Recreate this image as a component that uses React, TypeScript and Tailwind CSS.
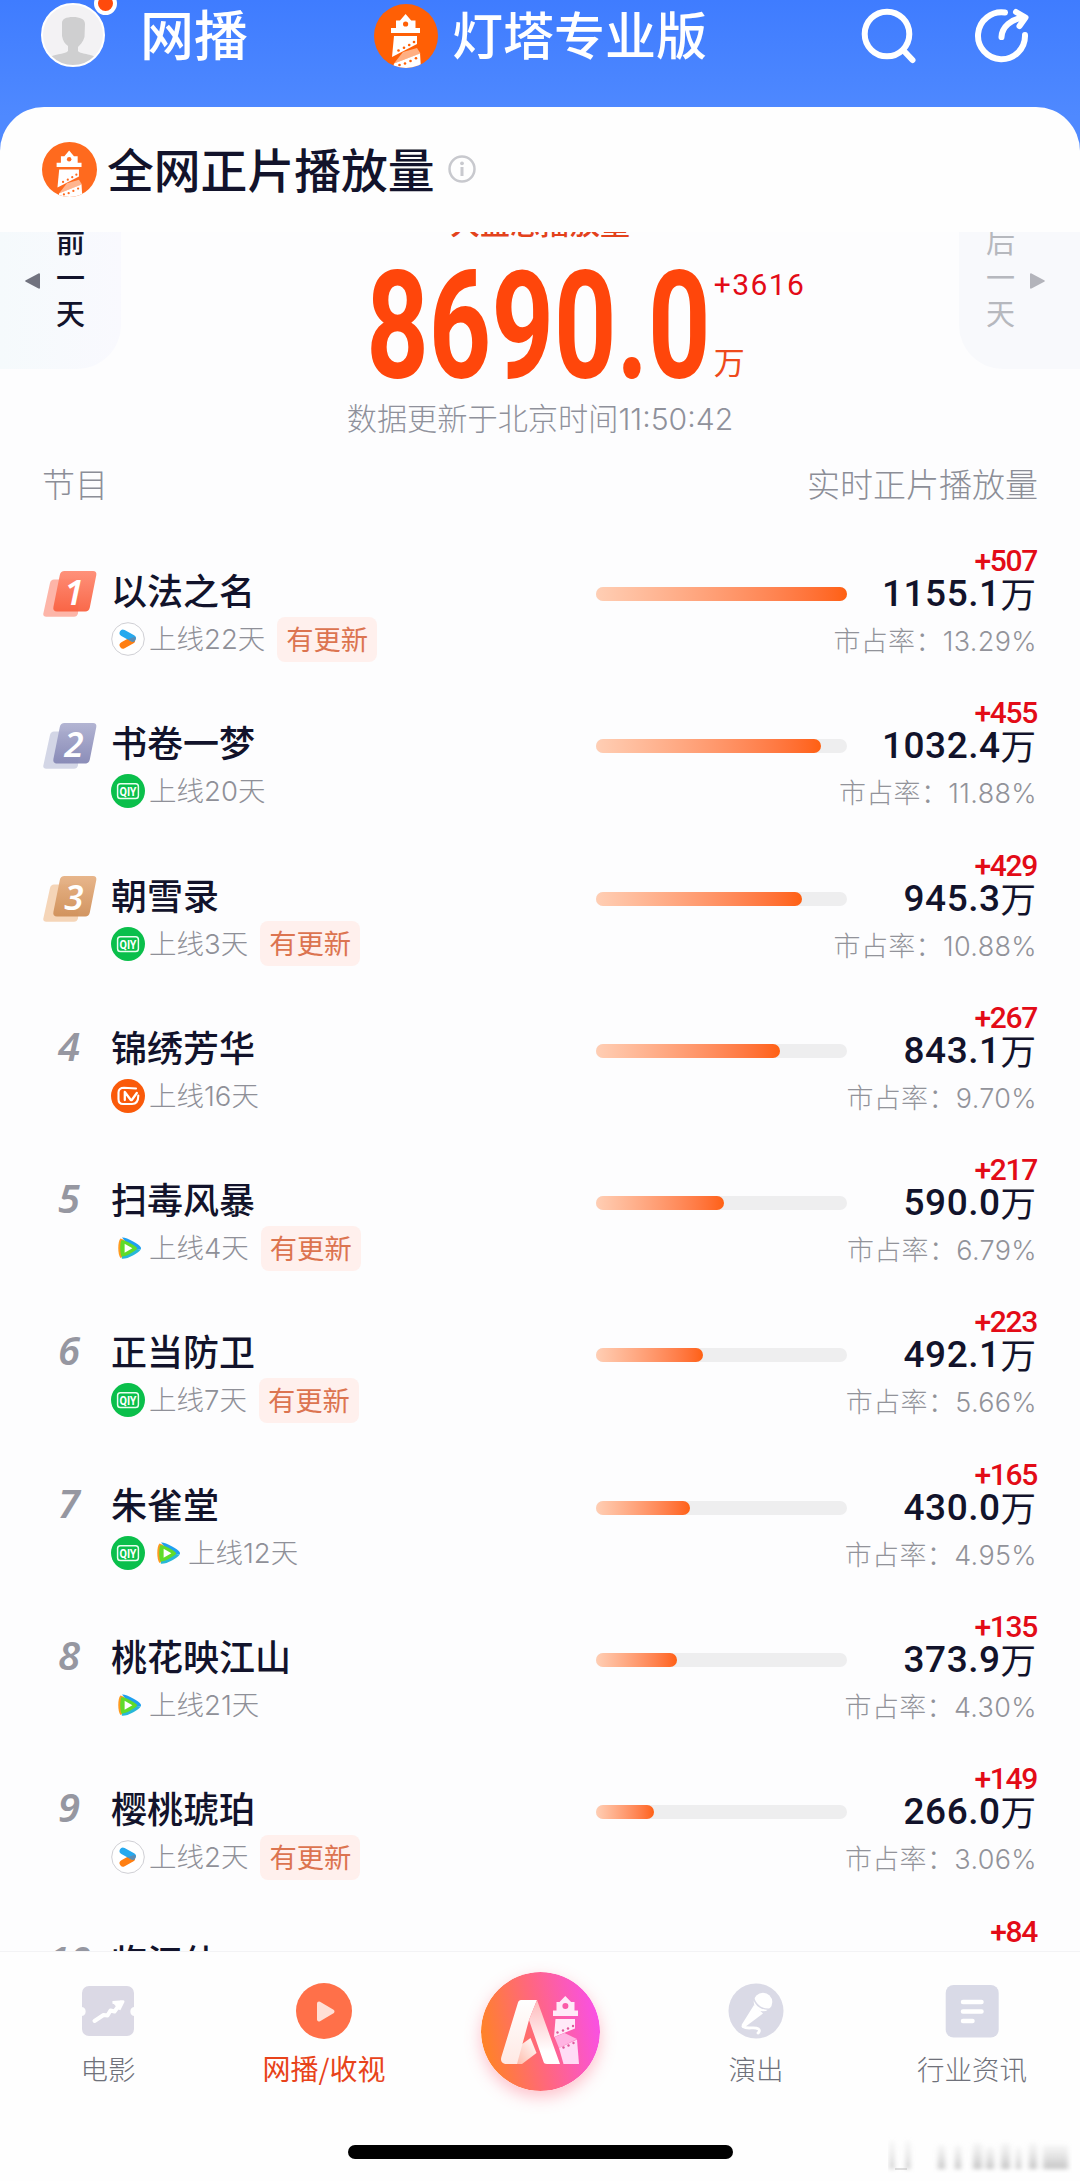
import React from "react";

const CJK = "font-['Noto_Sans_CJK_SC',sans-serif]";
const MIX = "font-['Inter','Noto_Sans_CJK_SC',sans-serif]";
const NUM = "font-['Roboto','Noto_Sans_CJK_SC',sans-serif]";

type Platform = "youku" | "iqiyi" | "mango" | "tencent";

interface Show {
  name: string;
  platforms: Platform[];
  days: number;
  updated?: boolean;
  bar: number;
  delta: number;
  value: string;
  share: string;
}

const shows: Show[] = [
  { name: "以法之名", platforms: ["youku"], days: 22, updated: true, bar: 251, delta: 507, value: "1155.1", share: "13.29%" },
  { name: "书卷一梦", platforms: ["iqiyi"], days: 20, bar: 225, delta: 455, value: "1032.4", share: "11.88%" },
  { name: "朝雪录", platforms: ["iqiyi"], days: 3, updated: true, bar: 206, delta: 429, value: "945.3", share: "10.88%" },
  { name: "锦绣芳华", platforms: ["mango"], days: 16, bar: 184, delta: 267, value: "843.1", share: "9.70%" },
  { name: "扫毒风暴", platforms: ["tencent"], days: 4, updated: true, bar: 128, delta: 217, value: "590.0", share: "6.79%" },
  { name: "正当防卫", platforms: ["iqiyi"], days: 7, updated: true, bar: 107, delta: 223, value: "492.1", share: "5.66%" },
  { name: "朱雀堂", platforms: ["iqiyi", "tencent"], days: 12, bar: 94, delta: 165, value: "430.0", share: "4.95%" },
  { name: "桃花映江山", platforms: ["tencent"], days: 21, bar: 81, delta: 135, value: "373.9", share: "4.30%" },
  { name: "樱桃琥珀", platforms: ["youku"], days: 2, updated: true, bar: 58, delta: 149, value: "266.0", share: "3.06%" },
];

const nextShow = { name: "临江仙", delta: 84, value: "188.6" };

function Lighthouse({ className, color, id }: { className: string; color: string; id: string }) {
  return (
    <svg viewBox="0 0 64 64" className={className}>
      <defs>
        <clipPath id={id}>
          <circle cx="32" cy="32" r="32" />
        </clipPath>
      </defs>
      <g clipPath={`url(#${id})`}>
        <rect width="64" height="64" fill={color} />
        <path d="M22 16.5h4l5.6-6.5 5.6 6.5h4.3V24H46v5H17v-5h5z" fill="#fff" />
        <circle cx="31.6" cy="20" r="2.6" fill={color} />
        <path d="M20 32h23v8L18 53z" fill="#fff" />
        <path d="M29 48l14-4 3.500 5.500L20 59.500z" fill="#fff" opacity=".5" />
        <path d="M46 49.500l1 15H19l1-5z" fill="#fff" />
        <g fill={color}>
          <circle cx="24.5" cy="46.5" r="1.3" />
          <circle cx="30" cy="43.8" r="1.3" />
          <circle cx="35.2" cy="41" r="1.3" />
          <circle cx="40" cy="38" r="1.3" />
          <circle cx="25.5" cy="61" r="1.3" />
          <circle cx="31" cy="59.500" r="1.3" />
          <circle cx="36.5" cy="57" r="1.3" />
          <circle cx="42" cy="54.2" r="1.3" />
        </g>
      </g>
    </svg>
  );
}

function PlatformIcon({ kind }: { kind: Platform }) {
  if (kind === "youku")
    return (
      <svg viewBox="0 0 34 34" className="size-[34px]">
        <circle cx="17" cy="17" r="16.3" fill="#fff" stroke="#c9c9cf" strokeWidth=".9" />
        <path d="M12 23.2l8.5-4.6" stroke="#ff7f12" strokeWidth="6.8" strokeLinecap="round" />
        <path d="M12 11l9.5 5.2" stroke="#26a9ee" strokeWidth="6.8" strokeLinecap="round" />
        <path d="M16.5 17.3l7.2-2.6c2 1.800 1 4.300-1.500 5.500z" fill="#6d83a0" opacity=".75" />
      </svg>
    );
  if (kind === "iqiyi")
    return (
      <svg viewBox="0 0 34 34" className="size-[34px]">
        <circle cx="17" cy="17" r="17" fill="#0abf4b" />
        <rect x="6.600" y="9.800" width="20.800" height="14.800" rx="2.800" fill="none" stroke="#e9fff0" strokeWidth="1.500" />
        <text x="17" y="21.600" textAnchor="middle" fontFamily="Roboto" fontWeight="700" fontSize="12.500" textLength="17" lengthAdjust="spacingAndGlyphs" fill="#fff">
          QIY
        </text>
      </svg>
    );
  if (kind === "mango")
    return (
      <svg viewBox="0 0 34 34" className="size-[34px]">
        <circle cx="17" cy="17" r="17" fill="#fa5a0a" />
        <path
          d="M25 9.500L13 8.800c-3.500 0-5.500 1.700-5.500 4.700v6.500c0 3.200 1.500 5 4.500 5h9c4 0 6.300-2.500 6.300-8.500"
          fill="none" stroke="#fff" strokeWidth="2.100" strokeLinecap="round"
        />
        <path d="M13.800 21v-8l6 8h1l5-7" fill="none" stroke="#fff" strokeWidth="2.300" strokeLinejoin="round" strokeLinecap="round" />
      </svg>
    );
  return (
    <svg viewBox="0 0 34 34" className="size-[34px]">
      <path d="M9.500 7.500c-3 3-3 16 0 19.500l4-2V9z" fill="#ff9a1f" />
      <path d="M11 6.600c4-.6 17 6.400 18.600 9.400.6 1 .5 1.800 0 2.600L20 17z" fill="#1ea0f0" />
      <path d="M10.800 27.800c5 .8 16.500-5.600 18.900-9.300L12 16z" fill="#27b7d8" />
      <path d="M10.300 9.300c3-1.300 14.500 5.200 16 8-1.500 2.800-12.500 8.800-15.700 8.300-1.700-3-1.800-12.800-.3-16.300z" fill="#5fdb2a" />
      <path d="M13.600 12.800l7.800 4.500-7.800 4.500z" fill="#fff" />
    </svg>
  );
}

const medals = [
  ["#ff8a72", "#f9603f", "#fdb5a8"],
  ["#aeb0d0", "#8486b4", "#d3d6e6"],
  ["#e6b184", "#cf8f58", "#f5d5b8"],
];

function Rank({ n }: { n: number }) {
  if (n > 3)
    return (
      <div className="flex w-[68px] shrink-0 justify-center pt-[22px] pr-[16px] font-['Noto_Sans',sans-serif] text-[40px] leading-[52px] font-semibold text-[#9697a1] italic">
        <span>{n}</span>
      </div>
    );
  const [top, bottom, back] = medals[n - 1];
  return (
    <div className="w-[68px] shrink-0 pt-[30px]">
      <svg viewBox="0 0 54 47" className="h-[47px] w-[54px]">
        <defs>
          <linearGradient id={`medal${n}`} x1="0" y1="0" x2="0" y2="1">
            <stop offset="0" stopColor={top} />
            <stop offset="1" stopColor={bottom} />
          </linearGradient>
        </defs>
        <path d="M11 8.500h26l-2 34c-.5 2-2 3.300-4 3.300H3.200C1 45.800-.2 44.500.4 42.300L7 12c.5-2.300 2-3.500 4-3.500z" fill={back} />
        <path d="M21.500 0H50c2.500 0 3.800 1.500 3.300 4l-6.500 32.500c-.5 2.500-2.200 4-4.500 4H14c-2.800 0-4.200-1.700-3.600-4.500L16.800 4c.5-2.500 2.200-4 4.700-4z" fill={`url(#medal${n})`} opacity=".94" />
        <text x="31" y="33.500" textAnchor="middle" fontFamily="Noto Sans" fontStyle="italic" fontWeight="600" fontSize="35" fill="#fff">
          {n}
        </text>
      </svg>
    </div>
  );
}

function ShowName({ children }: { children: string }) {
  return <div className={`${CJK} mt-[26px] h-[44px] text-[36px] leading-[44px] font-medium whitespace-nowrap text-[#12132b]`}>{children}</div>;
}

function Delta({ n }: { n: number }) {
  return <div className={`${NUM} mt-[5px] h-[30px] text-[30px] leading-[30px] font-medium tracking-[-1.300px] text-[#e30b17]`}>+{n}</div>;
}

function Value({ children }: { children: string }) {
  return (
    <div className={`${NUM} mr-[1px] -mt-[2px] flex h-[40px] text-[37px] leading-[40px] font-medium tracking-[0.500px] text-[#12132b]`}>
      {children}
      <span className={`${CJK} mt-[-1px] text-[35.500px] leading-[40px] font-normal tracking-normal`}>万</span>
    </div>
  );
}

function Row({ show, n }: { show: Show; n: number }) {
  return (
    <div className="flex h-[152.300px] shrink-0 px-[43px]">
      <Rank n={n} />
      <div className="flex w-[485px] shrink-0 flex-col">
        <ShowName>{show.name}</ShowName>
        <div className="mt-[5px] flex h-[46px] items-center">
          <div className="flex gap-[5px]">
            {show.platforms.map((p) => (
              <PlatformIcon key={p} kind={p} />
            ))}
          </div>
          <span className={`${MIX} ml-[4px] text-[27.500px] leading-[40px] font-light whitespace-nowrap text-[#8f9098]`}>上线{show.days}天</span>
          {show.updated && (
            <span className={`${CJK} ml-[12px] h-[45px] rounded-lg bg-[#fff0ed] px-[9px] text-[27.300px] leading-[42px] whitespace-nowrap text-[#dc7450]`}>有更新</span>
          )}
        </div>
      </div>
      <div className="mt-[46px] h-[14px] w-[251px] shrink-0 rounded-full bg-[#eeeeef]">
        <div className="h-full rounded-full bg-linear-to-r from-[#ffceb4] to-[#ff6010]" style={{ width: show.bar }} />
      </div>
      <div className="flex w-0 flex-1 flex-col items-end">
        <Delta n={show.delta} />
        <Value>{show.value}</Value>
        <div className={`${MIX} mt-[8px] h-[40px] text-[27px] leading-[40px] font-light tracking-[0.350px] whitespace-nowrap text-[#92939a]`}>市占率：{show.share}</div>
      </div>
    </div>
  );
}

function DayTab({ text, next }: { text: string; next?: boolean }) {
  return (
    <div
      className={`flex h-[137px] w-[121px] shrink-0 ${
        next ? "rounded-bl-[44px] bg-[#f8f9fc] pl-[27px] text-[#b6b8be]" : "rounded-br-[44px] bg-linear-to-r from-[#f5fafc] to-[#f9f9fe] pl-[25px] text-[#12132b]"
      }`}
    >
      {!next && (
        <svg viewBox="0 0 15 16" className="mt-[41px] mr-[16px] h-[16px] w-[15px]">
          <path d="M13.500.5c.8-.4 1.500 0 1.500.8v13.400c0 .8-.7 1.200-1.500.8L.8 8.800C0 8.400 0 7.600.8 7.200z" fill="#71737f" />
        </svg>
      )}
      <div className={`${CJK} mt-[-10px] w-[29px] text-[29px] leading-[36px] ${next ? "font-normal" : "font-medium"}`}>{text}</div>
      {next && (
        <svg viewBox="0 0 15 16" className="mt-[41px] ml-[15px] h-[16px] w-[15px]">
          <path d="M1.500.5C.7.1 0 .5 0 1.300v13.400c0 .8.700 1.200 1.500.8l12.700-6.700c.8-.4.8-1.200 0-1.600z" fill="#b3b4bb" />
        </svg>
      )}
    </div>
  );
}

function AiLogo() {
  return (
    <svg viewBox="0 0 119 119" className="size-[119px] rounded-full shadow-[0_6px_16px_rgba(255,80,110,0.35)]">
      <defs>
        <linearGradient id="aiBg" x1="0" y1=".6" x2="1" y2=".4">
          <stop offset="0" stopColor="#ff8324" />
          <stop offset=".5" stopColor="#ff6682" />
          <stop offset="1" stopColor="#f950e6" />
        </linearGradient>
        <linearGradient id="aiLeft" x1="0" y1="0" x2="0" y2="1">
          <stop offset="0" stopColor="#fff" />
          <stop offset="1" stopColor="#ffe9e4" />
        </linearGradient>
        <linearGradient id="aiRight" x1="0" y1="0" x2="0" y2="1">
          <stop offset="0" stopColor="#ffb9bb" />
          <stop offset=".8" stopColor="#fff" />
        </linearGradient>
        <linearGradient id="aiFold" x1="0" y1="1" x2="1" y2="0">
          <stop offset="0" stopColor="#ffb9a8" />
          <stop offset="1" stopColor="#fff" />
        </linearGradient>
      </defs>
      <circle cx="59.500" cy="59.500" r="59.500" fill="url(#aiBg)" />
      <path d="M49.500 66l6 15L41 92H34l3-17z" fill="url(#aiFold)" />
      <path d="M40 28h16l-8 20-12 44H26c-5 0-7-3-5.500-7.500L37 30.500c.5-1.600 1.500-2.500 3-2.500z" fill="url(#aiLeft)" />
      <path d="M56 28l23 64H66c-2 0-3-.7-3.600-2.500L48 48z" fill="url(#aiRight)" />
      <path d="M75.500 30h3l5.800-6 5.800 6h3.400v8.500H97V44H72v-5.500h3.500z" fill="#ffeaf8" />
      <circle cx="84.400" cy="34" r="3" fill="#fb5ba8" />
      <path d="M74.500 47H94v9.500L73 65z" fill="#ffe9f8" />
      <path d="M73.500 65l10-4L96 67l-18 9z" fill="#ffb3e2" />
      <path d="M78 76l18-8.500L98 92H82.500z" fill="#ffdcf6" />
      <g fill="#e0589c">
        <circle cx="76.500" cy="60.500" r="1.200" />
        <circle cx="82" cy="58.500" r="1.200" />
        <circle cx="87" cy="56.500" r="1.200" />
        <circle cx="92" cy="54" r="1.200" />
        <circle cx="82.500" cy="75.500" r="1.200" />
        <circle cx="87.500" cy="73.500" r="1.200" />
        <circle cx="92.500" cy="71" r="1.200" />
      </g>
    </svg>
  );
}

function NavItem({ label, active, children }: { label: string; active?: boolean; children: React.ReactNode }) {
  return (
    <div className="flex flex-col items-center pt-[31px]">
      <div className="h-[56px] w-[56px]">{children}</div>
      <span
        className={`${CJK} mt-[9px] leading-[40px] whitespace-nowrap ${
          active ? "text-[28px] font-normal text-[#e8431a]" : "text-[27.500px] font-light text-[#6f717a]"
        }`}
      >
        {label}
      </span>
    </div>
  );
}

export default function App() {
  return (
    <div className="flex h-[2181px] w-[1080px] flex-col overflow-hidden bg-[#fdfdfe]">
      <div className="flex h-[232px] shrink-0 flex-col bg-linear-to-b from-[#3f7cff] to-[#4f89ff] to-50%">
        <header className="flex h-[107px] shrink-0 pl-[41px] text-white">
          <div className="relative mt-[3px] size-[64px] shrink-0">
            <svg viewBox="0 0 64 64" className="size-[64px]">
              <clipPath id="avatar">
                <circle cx="32" cy="32" r="31" />
              </clipPath>
              <circle cx="32" cy="32" r="31" fill="#f3f2f4" />
              <g clipPath="url(#avatar)" fill="#cfcfd0">
                <path d="M21 20c0-4 4-6 11-6s12 2 12 7l-.5 13c-1.500 5-4.500 8-6.500 10v4c3 4 17 2 19 9v10H8V56c3-6 16-4 19-8v-5c-3-2-5-5-6-10z" />
              </g>
              <circle cx="32" cy="32" r="31" fill="none" stroke="#fff" strokeWidth="2" />
            </svg>
            <span className="absolute -top-[11px] left-[53px] size-[23px] rounded-full border-[4px] border-white bg-[#ff4a0c]" />
          </div>
          <span className={`${CJK} ml-[35px] text-[54px] leading-[66px] font-medium whitespace-nowrap`}>网播</span>
          <Lighthouse id="logoTop" color="#ff5f05" className="mt-[4px] ml-[126px] size-[64px] shrink-0" />
          <span className={`${CJK} ml-[14px] text-[51px] leading-[66px] font-medium whitespace-nowrap`}>灯塔专业版</span>
          <svg viewBox="0 0 58 58" className="mt-[7px] ml-[153px] size-[58px] shrink-0" fill="none" stroke="#fff" strokeWidth="6" strokeLinecap="round">
            <circle cx="27" cy="27" r="22.300" />
            <path d="M44 44l8.500 9" />
          </svg>
          <svg viewBox="0 0 58 58" className="mt-[7px] ml-[55px] size-[58px] shrink-0" fill="none" stroke="#fff" strokeWidth="6" strokeLinecap="round" strokeLinejoin="round">
            <path d="M32 5.500A23.500 23.500 0 1 0 52 28" />
            <path d="M28.500 30C29 20 38 12 51 10.500" />
            <path d="M43 5l9.500 5.500L46.500 19" />
          </svg>
        </header>
        <div className="flex h-[125px] rounded-t-[44px] bg-[#fefefe] pl-[42px]">
          <Lighthouse id="logoTitle" color="#ff6a1e" className="mt-[35px] size-[55px]" />
          <h1 className={`${CJK} mt-[31px] ml-[10px] text-[46.800px] leading-[60px] font-medium whitespace-nowrap text-[#12132b]`}>全网正片播放量</h1>
          <svg viewBox="0 0 28 28" className="mt-[48px] ml-[13px] size-[28px]">
            <circle cx="14" cy="14" r="12.500" fill="none" stroke="#c8c9ce" strokeWidth="2.500" />
            <circle cx="14" cy="8.300" r="1.900" fill="#c8c9ce" />
            <path d="M14 12v9" fill="none" stroke="#c8c9ce" strokeWidth="3" />
          </svg>
        </div>
      </div>

      <main className="flex h-[1719px] shrink-0 flex-col overflow-hidden">
        <section className="flex h-[220px] shrink-0 justify-between">
          <DayTab text="前一天" />
          <div className="flex flex-1 flex-col items-center">
            <div className={`${CJK} -mt-[31px] h-[40px] text-[30px] leading-[40px] font-medium text-[#e3421c]`}>大盘总播放量</div>
            <div className="mt-[26px] ml-[96px] flex h-[120px]">
              <div className="flex w-[342px] justify-center pr-[7px]">
                <span className={`${NUM} scale-x-[0.722] text-[151px] leading-[120px] font-bold text-[#ff460b]`}>8690.0</span>
              </div>
              <div className="flex flex-col justify-between pl-px">
                <span className={`${NUM} mt-[3px] text-[30px] leading-[30px] tracking-[1.400px] text-[#e30b17]`}>+3616</span>
                <span className={`${CJK} mb-[9px] text-[31px] leading-[34px] text-[#ee4a1c]`}>万</span>
              </div>
            </div>
            <div className={`${MIX} mt-[12px] text-[30.200px] leading-[40px] font-light whitespace-nowrap text-[#8f919b]`}>数据更新于北京时间11:50:42</div>
          </div>
          <DayTab text="后一天" next />
        </section>
        <div className={`${CJK} flex h-[89px] shrink-0 justify-between pt-[8px] pr-[42px] pl-[42px] text-[33px] leading-[46px] font-light text-[#8c8e97]`}>
          <span>节目</span>
          <span>实时正片播放量</span>
        </div>
        {shows.map((s, i) => (
          <Row key={s.name} show={s} n={i + 1} />
        ))}
        <div className="flex h-[152.300px] shrink-0 px-[43px]">
          <Rank n={shows.length + 1} />
          <div className="flex-1">
            <ShowName>{nextShow.name}</ShowName>
          </div>
          <div className="flex flex-col items-end">
            <Delta n={nextShow.delta} />
            <Value>{nextShow.value}</Value>
          </div>
        </div>
      </main>

      <footer className="h-[230px] shrink-0 border-t border-[#f3f3f5] bg-[#fefefe]">
        <nav className="grid h-[193px] grid-cols-5">
          <NavItem label="电影">
            <svg viewBox="0 0 56 56" className="size-[56px]">
              <path d="M9 3h38a7 7 0 0 1 7 7v14a4.600 4.600 0 0 0 0 9v13a7 7 0 0 1-7 7H9a7 7 0 0 1-7-7V33a4.600 4.600 0 0 0 0-9V10a7 7 0 0 1 7-7z" fill="#dbd9e5" />
              <path d="M14.500 38l9-6 4 .5 3-5 4 1 6.500-9" fill="none" stroke="#fff" strokeWidth="4" strokeLinecap="round" strokeLinejoin="round" />
              <path d="M32.500 19.500l10.500-.8-4 8" fill="#fff" stroke="#fff" strokeWidth="3" strokeLinejoin="round" />
            </svg>
          </NavItem>
          <NavItem label="网播/收视" active>
            <svg viewBox="0 0 56 56" className="size-[56px]">
              <circle cx="28" cy="28" r="28" fill="#ff7049" />
              <path d="M23 20.500l13.500 8L23 36.500z" fill="#ffe0d6" stroke="#ffe0d6" strokeWidth="4" strokeLinejoin="round" />
            </svg>
          </NavItem>
          <div className="flex justify-center pt-[20px]">
            <AiLogo />
          </div>
          <NavItem label="演出">
            <svg viewBox="0 0 56 56" className="size-[56px]">
              <circle cx="28" cy="28" r="27.500" fill="#dadae6" />
              <path d="M26 22l9 8.500L17 44c-2.500 1-4-.5-3-2.800z" fill="#fff" />
              <path d="M15 43.500c5 3.500 11-.5 15.500 2.500 1.500 1.200 1 3-.5 4" fill="none" stroke="#fff" strokeWidth="2.800" strokeLinecap="round" />
              <circle cx="35" cy="19" r="9.300" fill="#fff" />
              <path d="M25.500 14.500c2 8.500 9 12.500 17.500 11.500" fill="none" stroke="#dadae6" strokeWidth="1.500" />
            </svg>
          </NavItem>
          <NavItem label="行业资讯">
            <svg viewBox="0 0 56 56" className="size-[56px]">
              <rect x="1.700" y="2" width="53" height="52.500" rx="8" fill="#d9dae7" />
              <path d="M19 19h18.500M19 28.500h18.500M19 38h9.500" stroke="#fff" strokeWidth="4.500" strokeLinecap="round" />
            </svg>
          </NavItem>
        </nav>
        <div className="flex">
          <div className="ml-[348px] h-[14px] w-[385px] rounded-full bg-black" />
          <svg viewBox="0 0 184 36" className="-mt-[8px] ml-[155px] h-[36px] w-[184px]">
            <defs>
              <filter id="soft" x="-10%" y="-20%" width="120%" height="140%">
                <feGaussianBlur stdDeviation="2.600 2" />
              </filter>
              <linearGradient id="fade" x1="0" y1="0" x2="0" y2="1">
                <stop offset="0" stopColor="#ccc" stopOpacity=".15" />
                <stop offset="1" stopColor="#aaa" stopOpacity=".7" />
              </linearGradient>
            </defs>
            <g filter="url(#soft)" fill="url(#fade)">
              <rect x="2" y="4" width="4" height="28" />
              <rect x="18" y="4" width="4" height="28" />
              <rect x="50" y="8" width="7" height="24" />
              <rect x="67" y="8" width="6" height="24" />
              <rect x="85" y="6" width="9" height="26" />
              <rect x="98" y="10" width="8" height="22" />
              <rect x="113" y="6" width="9" height="26" />
              <rect x="128" y="10" width="5" height="22" />
              <rect x="141" y="6" width="8" height="26" />
              <rect x="155" y="8" width="25" height="24" />
            </g>
            <path d="M7 32h12" stroke="#bbb" strokeWidth="1" />
          </svg>
        </div>
      </footer>
    </div>
  );
}
